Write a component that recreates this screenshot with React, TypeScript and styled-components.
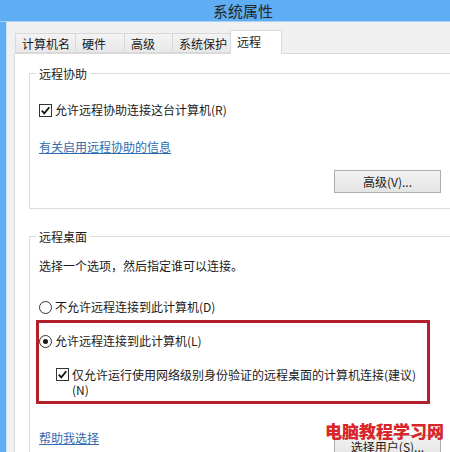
import React from "react";
import styled, { createGlobalStyle } from "styled-components";

const GlobalStyle = createGlobalStyle`
  html, body {
    margin: 0;
    padding: 0;
    background: #f0f0f0;
  }
  body {
    font-family: "Noto Sans CJK SC", "Noto Sans", sans-serif;
    font-size: 12px;
    color: #1a1a1a;
  }
`;

const Viewport = styled.div`
  position: relative;
  width: 450px;
  height: 452px;
  overflow: hidden;
`;

const Window = styled.div`
  width: 486px;
  height: 452px;
  display: flex;
  flex-direction: column;
  background: #5fadf2;
`;

const TitleBar = styled.div`
  height: 23px;
  border-bottom: 1px solid #a9d4f7;
  display: flex;
  align-items: center;
  justify-content: center;
  font-size: 15px;
  color: #262626;
`;

const Body = styled.div`
  flex: 1;
  display: flex;
  flex-direction: column;
  margin: 0 6px;
  padding: 8px 7px 0 7px;
  background: #f0f0f0;
  border-left: 1px solid #cfe6fa;
`;

const TabStrip = styled.div`
  display: flex;
  align-items: flex-end;
  height: 23px;
  padding-left: 1px;
  position: relative;
  z-index: 1;
`;

const Tab = styled.div<{ $w: number; $active?: boolean }>`
  box-sizing: border-box;
  width: ${(p) => p.$w}px;
  height: ${(p) => (p.$active ? 24 : 20)}px;
  margin-right: -1px;
  margin-bottom: ${(p) => (p.$active ? -1 : 0)}px;
  padding-left: 6px;
  display: flex;
  align-items: center;
  border: 1px solid #d9d9d9;
  border-bottom: ${(p) => (p.$active ? "none" : "1px solid #d9d9d9")};
  background: ${(p) => (p.$active ? "#ffffff" : "linear-gradient(#f3f3f3, #e8e8e8)")};
  padding-bottom: ${(p) => (p.$active ? 2 : 0)}px;
  position: relative;
  z-index: ${(p) => (p.$active ? 2 : 1)};
`;

const Panel = styled.div`
  flex: 1;
  display: flex;
  flex-direction: column;
  background: #ffffff;
  border: 1px solid #d9d9d9;
  padding: 19px 15px 0 14px;
`;

const GroupBox = styled.div<{ $gap?: number; $pad: string }>`
  position: relative;
  display: flex;
  flex-direction: column;
  margin-top: ${(p) => p.$gap || 0}px;
  padding: ${(p) => p.$pad};
  border: 1px solid #dcdcdc;
`;

const GroupLabel = styled.span`
  position: absolute;
  top: -8px;
  left: 6px;
  padding: 0 3px;
  line-height: 16px;
  background: #ffffff;
`;

const Row = styled.label<{ $gap?: number; $indent?: number }>`
  display: flex;
  align-items: center;
  gap: 3px;
  line-height: 16px;
  margin-top: ${(p) => p.$gap || 0}px;
  padding-left: ${(p) => p.$indent || 0}px;
`;

const WrapRow = styled(Row)`
  align-items: flex-start;
  line-height: 15px;
`;

const WrapText = styled.span`
  max-width: 350px;
`;

const Text = styled.div<{ $gap?: number }>`
  line-height: 16px;
  margin-top: ${(p) => p.$gap || 0}px;
`;

const Box = styled.span<{ $top?: number }>`
  box-sizing: border-box;
  flex: none;
  width: 13px;
  height: 13px;
  margin-top: ${(p) => p.$top || 0}px;
  border: 1px solid #333333;
  background: #ffffff;
  display: flex;
  align-items: center;
  justify-content: center;
`;

const Radio = styled.span<{ $on?: boolean }>`
  box-sizing: border-box;
  flex: none;
  width: 13px;
  height: 13px;
  border: 1px solid #333333;
  border-radius: 50%;
  background: #ffffff;
  display: flex;
  align-items: center;
  justify-content: center;

  &::after {
    content: "";
    display: ${(p) => (p.$on ? "block" : "none")};
    width: 5px;
    height: 5px;
    border-radius: 50%;
    background: #1a1a1a;
  }
`;

const Link = styled.a<{ $gap?: number }>`
  align-self: flex-start;
  line-height: 16px;
  margin-top: ${(p) => p.$gap || 0}px;
  color: #2d6cb0;
  text-decoration: underline;
  cursor: pointer;
`;

const ButtonRow = styled.div<{ $gap?: number }>`
  display: flex;
  justify-content: flex-end;
  margin-top: ${(p) => p.$gap || 0}px;
`;

const FooterRow = styled.div`
  display: flex;
  justify-content: space-between;
  align-items: flex-start;
  margin-top: 26px;
`;

const Button = styled.button<{ $top?: number }>`
  box-sizing: border-box;
  width: 107px;
  height: 23px;
  margin-top: ${(p) => p.$top || 0}px;
  padding: 0;
  border: 1px solid #adadad;
  background: linear-gradient(#f2f2f2, #e4e4e4);
  font-family: inherit;
  font-size: 12px;
  color: #1a1a1a;
`;

const Highlight = styled.div`
  box-sizing: border-box;
  width: 394px;
  margin: 5px 0 0 -3px;
  padding: 10px 0 4px 0;
  border: 3px solid #b3202c;
  display: flex;
  flex-direction: column;
`;

const Watermark = styled.div`
  position: absolute;
  left: 325px;
  top: 421px;
  font-size: 17px;
  font-weight: 900;
  line-height: 20px;
  color: #d8262b;
  white-space: nowrap;
`;

const Check = () => (
  <svg width="11" height="11" viewBox="0 0 11 11">
    <path d="M1.8 5.6 L4.3 8.3 L9.3 2.2" fill="none" stroke="#111" strokeWidth="1.8" />
  </svg>
);

const tabs = [
  { name: "计算机名", w: 61 },
  { name: "硬件", w: 50 },
  { name: "高级", w: 49 },
  { name: "系统保护", w: 59 },
  { name: "远程", w: 52, active: true },
];

export default function App() {
  return (
    <Viewport>
      <GlobalStyle />
      <Window>
        <TitleBar>系统属性</TitleBar>
        <Body>
          <TabStrip>
            {tabs.map((t) => (
              <Tab key={t.name} $w={t.w} $active={t.active}>
                {t.name}
              </Tab>
            ))}
          </TabStrip>
          <Panel>
            <GroupBox $pad="28px 15px 15px 9px">
              <GroupLabel>远程协助</GroupLabel>
              <Row>
                <Box>
                  <Check />
                </Box>
                允许远程协助连接这台计算机(R)
              </Row>
              <Link $gap={21}>有关启用远程协助的信息</Link>
              <ButtonRow $gap={15}>
                <Button>高级(V)...</Button>
              </ButtonRow>
            </GroupBox>

            <GroupBox $gap={27} $pad="21px 15px 30px 9px">
              <GroupLabel>远程桌面</GroupLabel>
              <Text>选择一个选项，然后指定谁可以连接。</Text>
              <Row $gap={25}>
                <Radio />
                不允许远程连接到此计算机(D)
              </Row>
              <Highlight>
                <Row>
                  <Radio $on />
                  允许远程连接到此计算机(L)
                </Row>
                <WrapRow $gap={18} $indent={17}>
                  <Box $top={1}>
                    <Check />
                  </Box>
                  <WrapText>仅允许运行使用网络级别身份验证的远程桌面的计算机连接(建议)(N)</WrapText>
                </WrapRow>
              </Highlight>
              <FooterRow>
                <Link>帮助我选择</Link>
                <Button $top={5}>选择用户(S)...</Button>
              </FooterRow>
            </GroupBox>
          </Panel>
        </Body>
      </Window>
      <Watermark>电脑教程学习网</Watermark>
    </Viewport>
  );
}
